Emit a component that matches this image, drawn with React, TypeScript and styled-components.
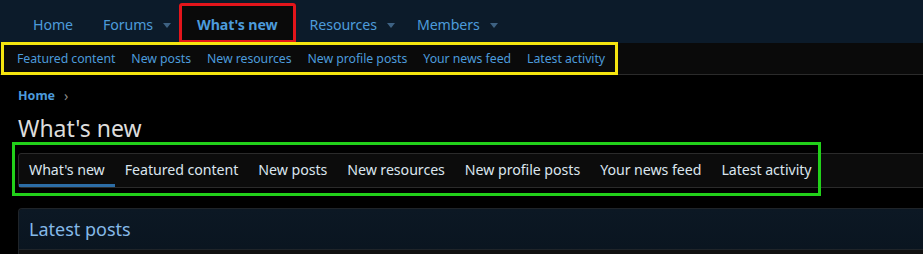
import styled, { createGlobalStyle } from "styled-components";

const GlobalStyle = createGlobalStyle`
  html, body {
    margin: 0;
    padding: 0;
    background: #000;
    overflow: hidden;
  }
  body {
    font-family: "Noto Sans", "Open Sans", sans-serif;
  }
`;

const NAV_ITEMS = [
  { label: "Home", caret: false },
  { label: "Forums", caret: true },
  { label: "What's new", caret: false, active: true },
  { label: "Resources", caret: true },
  { label: "Members", caret: true },
];

const SUB_ITEMS = [
  "Featured content",
  "New posts",
  "New resources",
  "New profile posts",
  "Your news feed",
  "Latest activity",
];

const TABS = ["What's new", ...SUB_ITEMS];

const NavBar = styled.nav`
  display: flex;
  align-items: flex-end;
  height: 43px;
  padding-left: 17px;
  background: #0c1b2a;
`;

const NavTab = styled.a<{ $active?: boolean; $caret?: boolean }>`
  display: flex;
  align-items: center;
  height: 40px;
  padding: 3px ${(p) => (p.$caret ? "8px" : p.$active ? "18px" : "16px")} 0
    ${(p) => (p.$caret ? "14px" : p.$active ? "18px" : "16px")};
  box-sizing: border-box;
  font-size: 14.2px;
  letter-spacing: -0.1px;
  color: #4c9bdb;
  font-weight: ${(p) => (p.$active ? 700 : 400)};
  background: ${(p) => (p.$active ? "#0a0a0a" : "transparent")};
  border-radius: 3px 3px 0 0;
  outline: ${(p) => (p.$active ? "3px solid #e3151b" : "none")};
  outline-offset: -3px;
  cursor: pointer;
`;

const Caret = styled.span`
  width: 0;
  height: 0;
  margin-left: 10px;
  border-left: 4.5px solid transparent;
  border-right: 4.5px solid transparent;
  border-top: 5px solid #3e6283;
  margin-top: 1px;
`;

const SubNav = styled.div`
  display: flex;
  height: 31px;
  background: #0a0a0a;
  border-bottom: 1px solid #2b2b2b;
`;

const SubList = styled.div`
  display: flex;
  align-items: center;
  margin-left: 2px;
  padding: 0 4px 0 7px;
  outline: 3px solid #f5e50f;
  outline-offset: -2px;
`;

const SubLink = styled.a`
  padding: 0 8px;
  font-size: 12.3px;
  letter-spacing: -0.05px;
  color: #4c9bdb;
  white-space: nowrap;
`;

const Main = styled.main`
  padding: 10px 0 0 18px;
  margin-right: -20px;
`;

const Breadcrumb = styled.div`
  display: flex;
  align-items: center;
  height: 20px;
  font-size: 12.5px;
`;

const CrumbLink = styled.a`
  color: #4c9bdb;
  font-weight: 700;
`;

const CrumbSep = styled.span`
  margin-left: 9px;
  color: #8a8a8a;
  font-size: 14px;
`;

const Title = styled.h1`
  margin: 8px 0 0;
  font-size: 23px;
  line-height: 30px;
  font-weight: 400;
  color: #dcdcdc;
`;

const TabsArea = styled.div`
  position: relative;
  margin-top: 10px;
`;

const TabBar = styled.div`
  display: flex;
  height: 33px;
  background: #0c0c0c;
  border: 1px solid #2b2b2b;
  border-radius: 3px;
`;

const Tab = styled.a<{ $active?: boolean }>`
  display: flex;
  align-items: center;
  padding: 1px 10px 0;
  font-size: 14.2px;
  letter-spacing: -0.05px;
  color: #dbe5ee;
  white-space: nowrap;
  box-sizing: border-box;
  border-bottom: 3px solid ${(p) => (p.$active ? "#2c6da6" : "transparent")};
`;

const Highlight = styled.div`
  position: absolute;
  left: -6px;
  top: -11px;
  width: 803px;
  height: 48px;
  border: 3px solid #22d11a;
  pointer-events: none;
`;

const Block = styled.section`
  margin-top: 20px;
  border: 1px solid #1f2429;
  border-right: none;
  border-radius: 4px 0 0 0;
  background: #111;
`;

const BlockHeader = styled.h2`
  margin: 0;
  height: 40px;
  display: flex;
  align-items: center;
  padding-left: 10px;
  font-size: 18px;
  font-weight: 400;
  color: #85b9e8;
  background: linear-gradient(to bottom, #0c1824, #0a1520);
  border-bottom: 1px solid #1f2429;
  border-radius: 4px 0 0 0;
`;

const BlockBody = styled.div`
  height: 20px;
`;

export default function App() {
  return (
    <>
      <GlobalStyle />
      <NavBar>
        {NAV_ITEMS.map((item) => (
          <NavTab key={item.label} $active={item.active} $caret={item.caret}>
            {item.label}
            {item.caret && <Caret />}
          </NavTab>
        ))}
      </NavBar>
      <SubNav>
        <SubList>
          {SUB_ITEMS.map((s) => (
            <SubLink key={s}>{s}</SubLink>
          ))}
        </SubList>
      </SubNav>
      <Main>
        <Breadcrumb>
          <CrumbLink>Home</CrumbLink>
          <CrumbSep>›</CrumbSep>
        </Breadcrumb>
        <Title>What's new</Title>
        <TabsArea>
          <TabBar>
            {TABS.map((t, i) => (
              <Tab key={t} $active={i === 0}>
                {t}
              </Tab>
            ))}
          </TabBar>
          <Highlight />
        </TabsArea>
        <Block>
          <BlockHeader>Latest posts</BlockHeader>
          <BlockBody />
        </Block>
      </Main>
    </>
  );
}
